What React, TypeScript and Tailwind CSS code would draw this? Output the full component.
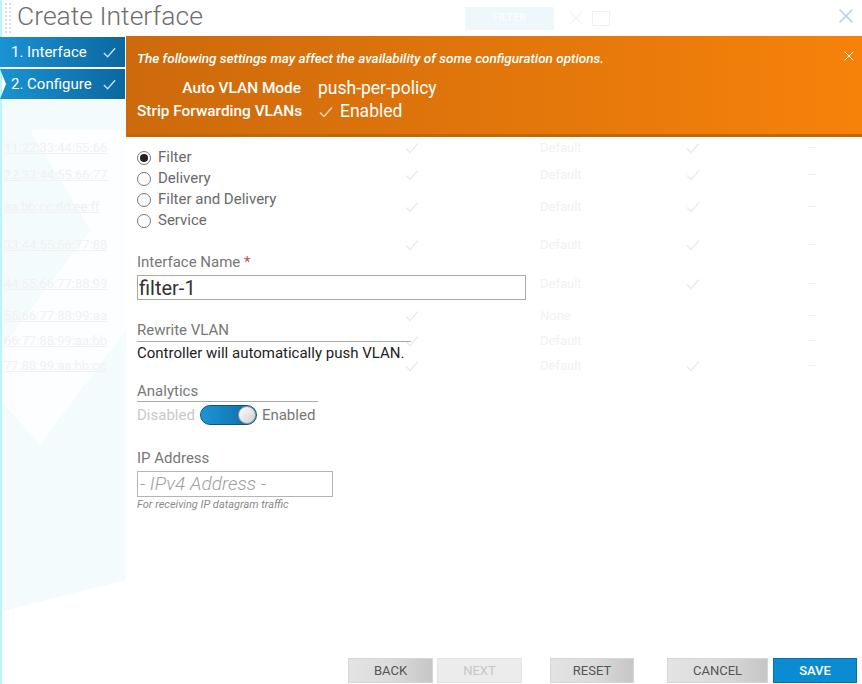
import { X } from 'lucide-react'

const ghostRows = [
  { h: 'h-[26px]', mac: '11:22:33:44:55:66', mark: true, pol: 'Default' },
  { h: 'h-[27px]', mac: '22:33:44:55:66:77', mark: true, pol: 'Default' },
  { h: 'h-[38px]', mac: 'aa:bb:cc:dd:ee:ff', mark: true, pol: 'Default' },
  { h: 'h-[38px]', mac: '33:44:55:66:77:88', mark: true, pol: 'Default' },
  { h: 'h-[39px]', mac: '44:55:66:77:88:99', mark: true, pol: 'Default' },
  { h: 'h-[26px]', mac: '55:66:77:88:99:aa', mark: false, pol: 'None' },
  { h: 'h-[24px]', mac: '66:77:88:99:aa:bb', mark: false, pol: 'Default' },
  { h: 'h-[26px]', mac: '77:88:99:aa:bb:cc', mark: true, pol: 'Default' },
]

function Check({ className }: { className?: string }) {
  return (
    <svg viewBox="0 0 16 16" className={className} fill="none" stroke="currentColor" strokeWidth="1.4">
      <polyline points="2,8.5 6,12.5 14,3.5" />
    </svg>
  )
}

function GhostTable() {
  return (
    <div className="absolute inset-0 pointer-events-none">
      <svg className="absolute left-0 top-0" width="126" height="684">
        <polygon points="0,100 126,100 126,580 0,612" fill="#f4fbfd" />
        <polygon points="30,130 126,130 126,330 40,445 0,400 0,350 90,230" fill="#fcfeff" />
      </svg>
      <div className="absolute left-0 top-0 w-[2px] h-full bg-[#b9f4ff]" />
      <div className="absolute left-0 top-[135px] w-full flex flex-col text-[13px] text-[#f1f1f1] font-['Roboto']">
        {ghostRows.map((r, i) => (
          <div key={i} className={`${r.h} flex items-center`}>
            <span className="w-[120px] pl-1 underline overflow-hidden whitespace-nowrap">{r.mac}</span>
            <span className="w-[284px]" />
            <span className="w-[136px]">
              <Check className="w-4 h-4 text-[#ebebeb]" />
            </span>
            <span className="w-[145px]">{r.pol}</span>
            <span className="w-[122px]">{r.mark ? <Check className="w-4 h-4 text-[#ebebeb]" /> : null}</span>
            <span>—</span>
          </div>
        ))}
      </div>
    </div>
  )
}

function StepTab({ label, notch }: { label: string; notch?: boolean }) {
  return (
    <div
      className={`h-[30px] w-[125px] flex items-center justify-between pl-[11px] pr-[8px] bg-gradient-to-r from-[#1a93d2] to-[#0b67a0] text-white text-[15px] ${
        notch ? '[clip-path:polygon(0_0,100%_0,100%_100%,0_100%,6px_50%)]' : ''
      }`}
    >
      <span>{label}</span>
      <Check className="w-[15px] h-[15px] text-[#c9e3f2]" />
    </div>
  )
}

function Radio({ label, checked }: { label: string; checked?: boolean }) {
  return (
    <label className="h-[21px] flex items-center gap-[7px] text-[15px] text-[#6a6a6a]">
      <span className="w-[14px] h-[14px] rounded-full border border-[#777] flex items-center justify-center bg-white">
        {checked && <span className="w-[8px] h-[8px] rounded-full bg-[#222]" />}
      </span>
      {label}
    </label>
  )
}

function FooterButton({ label, w, disabled, primary }: { label: string; w: string; disabled?: boolean; primary?: boolean }) {
  const tone = primary
    ? 'bg-[#0a8bd2] border-[#0a6fa8] text-white font-medium'
    : disabled
      ? 'bg-[#ececec] border-[#e4e4e4] text-[#c6c6c6]'
      : 'bg-gradient-to-r from-[#e3e3e3] via-[#dcdcdc] to-[#c6c6c6] border-[#d6d6d6] text-[#555]'
  return (
    <button className={`${w} h-[25px] border text-[13px] uppercase flex items-center justify-center ${tone}`}>
      {label}
    </button>
  )
}

export default function App() {
  return (
    <div className="relative w-[862px] h-[684px] overflow-hidden bg-white font-['Roboto',sans-serif]">
      <GhostTable />

      <div className="relative flex flex-col h-full">
        {/* header */}
        <div className="h-[36px] flex items-center pl-[5px] pr-[4px]">
          <div className="grid grid-cols-2 gap-[2px] mr-[6px] opacity-60">
            {Array.from({ length: 16 }).map((_, i) => (
              <span key={i} className="w-[2px] h-[2px] bg-[#c8c8c8]" />
            ))}
          </div>
          <h1 className="text-[26.5px] font-light text-[#6e6e6e] leading-none -mt-[4px]">Create Interface</h1>
          <div className="ml-auto flex items-center">
            <div className="w-[89px] h-[23px] bg-[#eef7fc] text-[#fafdff] text-[11px] font-bold flex items-center justify-center mr-[12px]">
              FILTER
            </div>
            <X className="w-[20px] h-[20px] text-[#f3f3f3]" strokeWidth={1.5} />
            <div className="w-[18px] h-[15px] border border-[#f1f1f1] ml-[6px] mr-[224px]" />
            <X className="w-[24px] h-[24px] text-[#a9d3ea] -mt-[4px]" strokeWidth={1.5} />
          </div>
        </div>

        <div className="flex flex-1">
          {/* steps */}
          <div className="w-[126px] flex flex-col gap-[2px] pt-[1px]">
            <StepTab label="1. Interface" />
            <StepTab label="2. Configure" notch />
          </div>

          <div className="flex-1 flex flex-col">
            {/* warning banner */}
            <div className="h-[101px] relative bg-gradient-to-r from-[#cd6a0c] to-[#f6820a] border-b-[3px] border-[#c46606] pl-[11px] pt-[13px] text-white">
              <p className="text-[13.5px] italic font-medium leading-[18px]">
                The following settings may affect the availability of some configuration options.
              </p>
              <div className="mt-[10px] grid grid-cols-[164px_1fr] gap-x-[17px] items-center">
                <span className="text-right text-[15.4px] font-medium leading-[23px] whitespace-nowrap">Auto VLAN Mode</span>
                <span className="text-[17.5px] leading-[23px]">push-per-policy</span>
                <span className="text-right text-[15.4px] font-medium leading-[23px] whitespace-nowrap">Strip Forwarding VLANs</span>
                <span className="text-[17.5px] leading-[23px] flex items-center gap-[6px]">
                  <Check className="w-[16px] h-[16px] text-[#f6d9b8]" />
                  Enabled
                </span>
              </div>
              <X className="absolute right-[5px] top-[12px] w-[16px] h-[16px] text-white" strokeWidth={1.5} />
            </div>

            {/* form */}
            <div className="pl-[11px] pt-[10px] flex flex-col items-start">
              <Radio label="Filter" checked />
              <Radio label="Delivery" />
              <Radio label="Filter and Delivery" />
              <Radio label="Service" />

              <div className="mt-[21px] text-[15px] text-[#777] leading-[20px]">
                Interface Name <span className="text-[#c0504d]">*</span>
              </div>
              <div className="mt-[3px] w-[389px] h-[25px] border border-[#a9a9a9] bg-white flex items-center pl-[1px] text-[20px] text-[#333]">
                filter-1
              </div>

              <div className="mt-[20px] w-[274px] text-[15px] text-[#777] leading-[20px] border-b border-[#aaa] pb-[1px]">
                Rewrite VLAN
              </div>
              <div className="text-[15px] text-[#222] leading-[20px] mt-[1px]">Controller will automatically push VLAN.</div>

              <div className="mt-[18px] w-[181px] text-[15px] text-[#777] leading-[20px] border-b border-[#aaa]">
                Analytics
              </div>
              <div className="mt-[2px] h-[22px] flex items-center gap-[5px] text-[15px]">
                <span className="text-[#c9c9c9]">Disabled</span>
                <span className="w-[57px] h-[20px] rounded-full bg-gradient-to-r from-[#1f95d4] to-[#0a6aa5] border border-[#0b5580] relative">
                  <span className="absolute right-0 top-[0px] w-[18px] h-[18px] rounded-full bg-gradient-to-br from-white to-[#cfcfcf] border border-[#9a9a9a]" />
                </span>
                <span className="text-[#777]">Enabled</span>
              </div>

              <div className="mt-[22px] text-[15px] text-[#777] leading-[20px]">IP Address</div>
              <div className="mt-[3px] w-[196px] h-[26px] border border-[#b5b5b5] bg-white flex items-center pl-[2px] text-[19px] italic font-light text-[#a0a0a0]">
                - IPv4 Address -
              </div>
              <div className="text-[11px] italic text-[#8a8a8a] leading-[14px] mt-[1px]">For receiving IP datagram traffic</div>
            </div>
          </div>
        </div>

        {/* footer */}
        <div className="h-[26px] flex items-start pl-[348px]">
          <FooterButton label="Back" w="w-[85px]" />
          <span className="w-[4px]" />
          <FooterButton label="Next" w="w-[85px]" disabled />
          <span className="w-[28px]" />
          <FooterButton label="Reset" w="w-[84px]" />
          <span className="w-[33px]" />
          <FooterButton label="Cancel" w="w-[101px]" />
          <span className="w-[5px]" />
          <FooterButton label="Save" w="w-[84px]" primary />
        </div>
      </div>
    </div>
  )
}
